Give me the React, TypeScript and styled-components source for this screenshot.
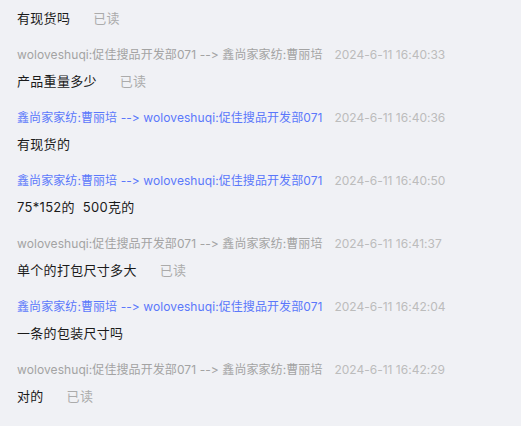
import React from "react";
import styled, { createGlobalStyle } from "styled-components";

const Global = createGlobalStyle`
  html, body { margin: 0; padding: 0; background: #f0f1f5; }
  body {
    font-family: Inter, "Noto Sans CJK SC", sans-serif;
    font-variant-ligatures: none;
    font-feature-settings: "calt" 0, "liga" 0;
    overflow: hidden;
  }
`;

const Viewport = styled.div`
  width: 521px;
  height: 426px;
  overflow: hidden;
  background: #f0f1f5;
`;

const List = styled.div`
  display: flex;
  flex-direction: column;
  gap: 17px;
  margin-top: -18px;
  padding-left: 17px;
`;

const Message = styled.div`
  display: flex;
  flex-direction: column;
  gap: 6px;
`;

const Header = styled.div<{ $mine: boolean }>`
  display: flex;
  align-items: center;
  gap: 12px;
  font-size: 12px;
  line-height: 20px;
  height: 20px;
  letter-spacing: 0.08px;
  white-space: nowrap;
  color: ${(p) => (p.$mine ? "#5b78fb" : "#a3a3a3")};
`;

const Time = styled.span`
  color: #bcbcbc;
  letter-spacing: 0;
`;

const Body = styled.div`
  display: flex;
  align-items: center;
  gap: 23px;
  font-size: 13px;
  line-height: 20px;
  height: 20px;
  letter-spacing: 0.3px;
  color: #1a1a1a;
  white-space: pre;
`;

const Read = styled.span`
  color: #ababab;
`;

const A = "woloveshuqi:促佳搜品开发部071";
const B = "鑫尚家家纺:曹丽培";

type Msg = { mine: boolean; time: string; text: string; read?: boolean };

const msgs: Msg[] = [
  { mine: false, time: "2024-6-11 16:40:20", text: "有现货吗", read: true },
  { mine: false, time: "2024-6-11 16:40:33", text: "产品重量多少", read: true },
  { mine: true, time: "2024-6-11 16:40:36", text: "有现货的" },
  { mine: true, time: "2024-6-11 16:40:50", text: "75*152的  500克的" },
  { mine: false, time: "2024-6-11 16:41:37", text: "单个的打包尺寸多大", read: true },
  { mine: true, time: "2024-6-11 16:42:04", text: "一条的包装尺寸吗" },
  { mine: false, time: "2024-6-11 16:42:29", text: "对的", read: true },
];

export default function App() {
  return (
    <Viewport>
      <Global />
      <List>
        {msgs.map((m, i) => (
          <Message key={i}>
            <Header $mine={m.mine}>
              <span>{m.mine ? `${B} --> ${A}` : `${A} --> ${B}`}</span>
              <Time>{m.time}</Time>
            </Header>
            <Body>
              <span>{m.text}</span>
              {m.read && <Read>已读</Read>}
            </Body>
          </Message>
        ))}
      </List>
    </Viewport>
  );
}
